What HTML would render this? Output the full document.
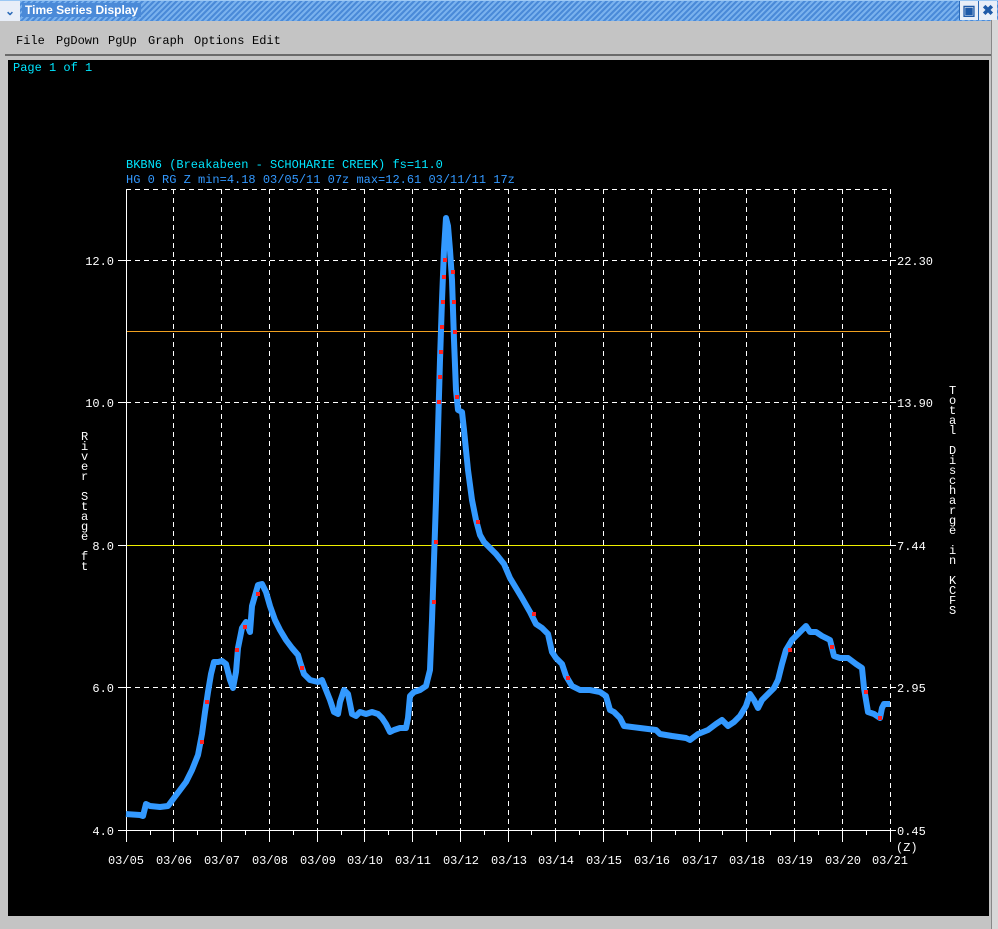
<!DOCTYPE html>
<html><head><meta charset="utf-8"><style>
body{margin:0;width:998px;height:929px;overflow:hidden;background:#c4c4c4;font-family:"Liberation Mono",monospace}
#tb{position:absolute;left:0;top:0;width:998px;height:20px;background:repeating-linear-gradient(135deg,#4a8ad8 0 2px,#7ab2ee 2px 4px);border-top:1px solid #9cc8f4}
#tb .t{position:absolute;left:22px;top:2px;color:#fff;font:bold 12px "Liberation Sans",sans-serif;background:#4a8ad8;padding:0 3px}
#tb .m{position:absolute;left:0;top:0;width:20px;height:20px;background:#e8eef8;color:#2a6ab8;font:bold 12px sans-serif;text-align:center;line-height:20px}
.b{position:absolute;top:0;width:18px;height:19px;background:#e8eef8;border-left:1px solid #2a6ab8;color:#1e5aa8;text-align:center;font:bold 14px sans-serif;line-height:19px}
#mb{position:absolute;left:5px;top:28px;width:988px;height:26px;background:#c4c4c4;border-bottom:2px solid #6a6a6a}
#mb span{position:absolute;top:6px;font-size:12px;color:#000}
#blk{position:absolute;left:8px;top:60px;width:981px;height:856px;background:#000}
#rs{position:absolute;left:991px;top:20px;width:7px;height:909px;background:#d8d8d8;border-left:1px solid #888}
</style></head><body>
<div id="tb"><div class="m">&#8964;</div><div class="t">Time Series Display</div><div class="b" style="left:959px">&#9635;</div><div class="b" style="left:978px">&#10006;</div></div>
<div id="mb"><span style="left:11px">File</span><span style="left:51px">PgDown</span><span style="left:103px">PgUp</span><span style="left:143px">Graph</span><span style="left:189px">Options</span><span style="left:247px">Edit</span></div>
<div id="rs"></div>
<div id="blk"></div>
<svg style="position:absolute;left:0;top:0" width="998" height="929" font-family="Liberation Mono, monospace" font-size="12">
<text x="13" y="71" fill="#00e6ff">Page 1 of 1</text>
<text x="126" y="168" fill="#00e6ff">BKBN6 (Breakabeen - SCHOHARIE CREEK) fs=11.0</text>
<text x="126" y="183" fill="#3399ff">HG 0 RG Z min=4.18 03/05/11 07z max=12.61 03/11/11 17z</text>
<g stroke="#fff" stroke-width="1" stroke-dasharray="5,4" fill="none">
<line x1="126" y1="189.5" x2="890" y2="189.5"/>
<line x1="126" y1="260.5" x2="890" y2="260.5"/>
<line x1="126" y1="402.5" x2="890" y2="402.5"/>
<line x1="126" y1="687.5" x2="890" y2="687.5"/>
<path d="M173.5 189V830M221.5 189V830M269.5 189V830M317.5 189V830M364.5 189V830M412.5 189V830M460.5 189V830M508.5 189V830M555.5 189V830M603.5 189V830M651.5 189V830M699.5 189V830M746.5 189V830M794.5 189V830M842.5 189V830M890.5 189V830"/>
</g>
<line x1="126" y1="331.5" x2="890" y2="331.5" stroke="#f0a020"/>
<line x1="126" y1="545.5" x2="890" y2="545.5" stroke="#f0f000"/>
<g stroke="#fff" fill="none">
<line x1="126.5" y1="189" x2="126.5" y2="842"/>
<line x1="118" y1="830.5" x2="890" y2="830.5"/>
<path d="M173.5 830V842M221.5 830V842M269.5 830V842M317.5 830V842M364.5 830V842M412.5 830V842M460.5 830V842M508.5 830V842M555.5 830V842M603.5 830V842M651.5 830V842M699.5 830V842M746.5 830V842M794.5 830V842M842.5 830V842M890.5 830V842"/>
<path d="M150.5 830V835M197.5 830V835M245.5 830V835M293.5 830V835M341.5 830V835M388.5 830V835M436.5 830V835M484.5 830V835M531.5 830V835M579.5 830V835M627.5 830V835M675.5 830V835M722.5 830V835M770.5 830V835M818.5 830V835M866.5 830V835"/>
<path d="M118 260.5H126M118 402.5H126M118 545.5H126M118 687.5H126M890 260.5H896M890 402.5H896M890 545.5H896M890 687.5H896M890 830.5H896"/>
</g>
<g fill="#fff" text-anchor="end">
<text x="114" y="265">12.0</text><text x="114" y="407">10.0</text><text x="114" y="550">8.0</text><text x="114" y="692">6.0</text><text x="114" y="835">4.0</text>
</g>
<g fill="#fff">
<text x="897" y="265">22.30</text><text x="897" y="407">13.90</text><text x="897" y="550">7.44</text><text x="897" y="692">2.95</text><text x="897" y="835">0.45</text>
<text x="896" y="851">(Z)</text>
</g>
<g fill="#fff" text-anchor="middle">
<text x="126" y="864">03/05</text><text x="174" y="864">03/06</text><text x="222" y="864">03/07</text><text x="270" y="864">03/08</text><text x="318" y="864">03/09</text><text x="365" y="864">03/10</text><text x="413" y="864">03/11</text><text x="461" y="864">03/12</text><text x="509" y="864">03/13</text><text x="556" y="864">03/14</text><text x="604" y="864">03/15</text><text x="652" y="864">03/16</text><text x="700" y="864">03/17</text><text x="747" y="864">03/18</text><text x="795" y="864">03/19</text><text x="843" y="864">03/20</text><text x="890" y="864">03/21</text>
</g>
<text fill="#fff" font-size="12"><tspan x="81" y="440">R</tspan><tspan x="81" dy="10">i</tspan><tspan x="81" dy="10">v</tspan><tspan x="81" dy="10">e</tspan><tspan x="81" dy="10">r</tspan><tspan x="81" dy="20">S</tspan><tspan x="81" dy="10">t</tspan><tspan x="81" dy="10">a</tspan><tspan x="81" dy="10">g</tspan><tspan x="81" dy="10">e</tspan><tspan x="81" dy="20">f</tspan><tspan x="81" dy="10">t</tspan></text>
<text fill="#fff" font-size="12"><tspan x="949" y="394">T</tspan><tspan x="949" dy="10">o</tspan><tspan x="949" dy="10">t</tspan><tspan x="949" dy="10">a</tspan><tspan x="949" dy="10">l</tspan><tspan x="949" dy="20">D</tspan><tspan x="949" dy="10">i</tspan><tspan x="949" dy="10">s</tspan><tspan x="949" dy="10">c</tspan><tspan x="949" dy="10">h</tspan><tspan x="949" dy="10">a</tspan><tspan x="949" dy="10">r</tspan><tspan x="949" dy="10">g</tspan><tspan x="949" dy="10">e</tspan><tspan x="949" dy="20">i</tspan><tspan x="949" dy="10">n</tspan><tspan x="949" dy="20">K</tspan><tspan x="949" dy="10">C</tspan><tspan x="949" dy="10">F</tspan><tspan x="949" dy="10">S</tspan></text>
<polyline fill="none" stroke="#3399ff" stroke-width="6" stroke-linejoin="round" points="126,814 140,815 143,816 146,804 150,806 160,807 168,806 174,798 180,790 186,782 192,770 198,755 202,734 205,712 208,692 211,674 214,662 218,662 222,661 226,664 230,680 233,688 236,672 238,648 242,628 246,622 250,632 252,606 256,592 258,585 262,584 266,592 270,606 275,620 280,630 286,640 292,648 298,655 300,662 304,674 310,680 318,682 322,680 326,690 330,700 334,712 338,714 340,702 344,690 348,694 352,714 356,716 360,712 366,714 372,712 378,714 382,718 386,724 390,732 394,730 400,728 406,728 408,718 410,696 414,692 420,690 426,686 430,670 432,620 434,560 436,500 438,430 440,360 442,300 444,250 446,218 448,226 450,250 452,280 454,340 456,390 458,410 462,412 464,430 468,470 472,500 476,520 480,535 484,542 490,548 496,554 504,564 510,578 516,588 522,598 530,612 536,624 542,628 548,634 552,652 556,658 562,664 566,676 572,686 580,690 590,690 600,692 606,696 610,710 614,712 620,718 624,726 640,728 656,730 660,734 672,736 686,738 690,740 698,734 708,730 716,724 722,720 728,726 734,722 740,716 746,706 750,694 754,700 758,708 762,700 768,694 774,688 778,680 782,664 786,650 792,640 798,634 806,626 810,632 816,632 822,636 830,640 834,656 840,658 848,658 856,664 862,668 864,688 866,700 868,712 874,714 880,718 882,708 884,704 890,704"/>
<g fill="#ff2020">
<rect x="437" y="400" width="4" height="4"/><rect x="438" y="375" width="4" height="4"/><rect x="439" y="350" width="4" height="4"/><rect x="440" y="325" width="4" height="4"/><rect x="441" y="300" width="4" height="4"/><rect x="442" y="275" width="4" height="4"/><rect x="443" y="258" width="4" height="4"/><rect x="451" y="270" width="4" height="4"/><rect x="452" y="300" width="4" height="4"/><rect x="453" y="330" width="4" height="4"/><rect x="455" y="395" width="4" height="4"/><rect x="432" y="600" width="4" height="4"/><rect x="434" y="540" width="4" height="4"/><rect x="243" y="625" width="4" height="4"/><rect x="235" y="648" width="4" height="4"/><rect x="205" y="700" width="4" height="4"/><rect x="200" y="740" width="4" height="4"/><rect x="256" y="592" width="4" height="4"/><rect x="300" y="666" width="4" height="4"/><rect x="476" y="520" width="4" height="4"/><rect x="532" y="612" width="4" height="4"/><rect x="566" y="676" width="4" height="4"/><rect x="788" y="648" width="4" height="4"/><rect x="830" y="645" width="4" height="4"/><rect x="864" y="690" width="4" height="4"/><rect x="878" y="716" width="4" height="4"/>
</g>
</svg>
</body></html>
